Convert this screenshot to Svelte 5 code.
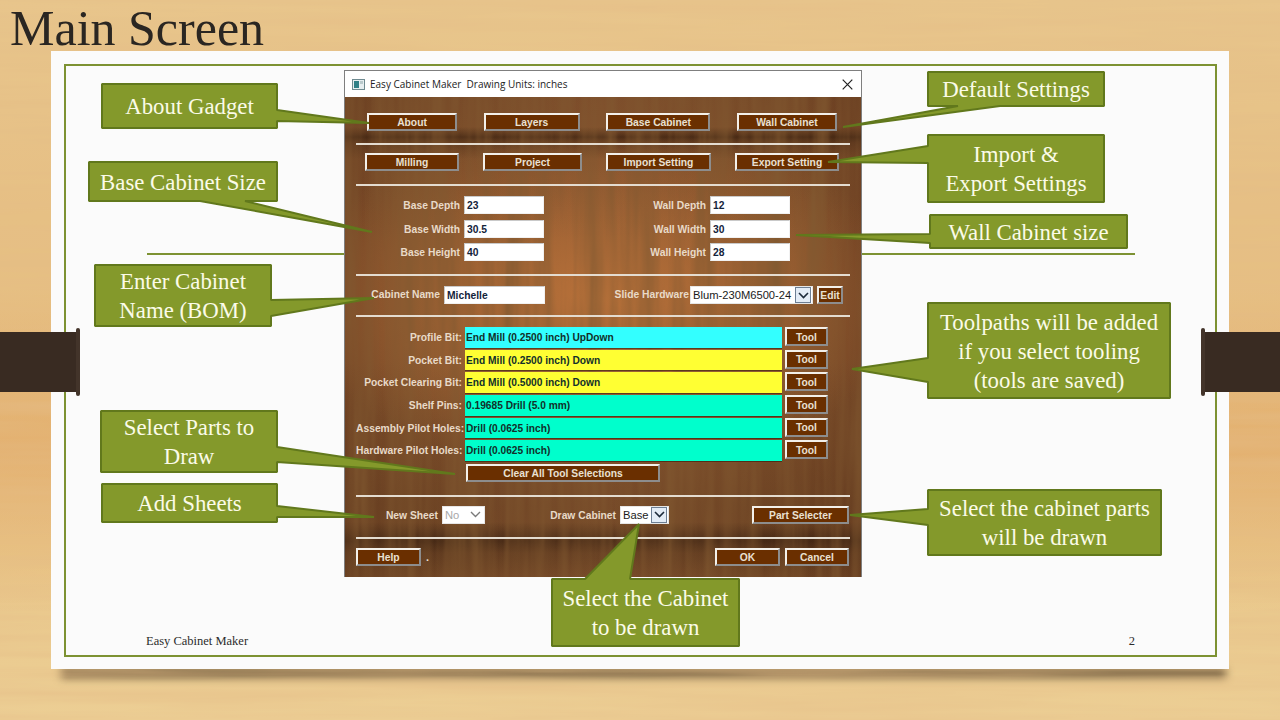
<script>
  const callouts = [
    { x: 101, y: 83, w: 177, h: 46, edge: 'right', a: 110, b: 121, tip: [369, 123], lines: ['About Gadget'] },
    { x: 88, y: 161, w: 190, h: 41, edge: 'bottom', a: 200, b: 245, tip: [372, 232], lines: ['Base Cabinet Size'] },
    { x: 94, y: 264, w: 178, h: 63, edge: 'right', a: 300, b: 316, tip: [374, 298], lines: ['Enter Cabinet', 'Name (BOM)'] },
    { x: 100, y: 410, w: 178, h: 63, edge: 'right', a: 447, b: 462, tip: [455, 474], lines: ['Select Parts to', 'Draw'] },
    { x: 101, y: 483, w: 177, h: 40, edge: 'right', a: 506, b: 517, tip: [374, 517], lines: ['Add Sheets'] },
    { x: 927, y: 71, w: 178, h: 36, edge: 'bottom', a: 958, b: 1000, tip: [843, 127], lines: ['Default Settings'] },
    { x: 927, y: 134, w: 178, h: 69, edge: 'left', a: 146, b: 163, tip: [828, 162], lines: ['Import &', 'Export Settings'] },
    { x: 929, y: 214, w: 199, h: 35, edge: 'left', a: 234, b: 243, tip: [796, 235], lines: ['Wall Cabinet size'] },
    { x: 927, y: 302, w: 244, h: 97, edge: 'left', a: 358, b: 382, tip: [852, 369], lines: ['Toolpaths will be added', 'if you select tooling', '(tools are saved)'] },
    { x: 927, y: 489, w: 235, h: 67, edge: 'left', a: 509, b: 525, tip: [850, 515], lines: ['Select the cabinet parts', 'will be drawn'] },
    { x: 551, y: 578, w: 189, h: 69, edge: 'top', a: 585, b: 630, tip: [639, 524], lines: ['Select the Cabinet', 'to be drawn'] }
  ];

  function outline(c) {
    const l = c.x + 1, u = c.y + 1, r = c.x + c.w - 1, d = c.y + c.h - 1, t = c.tip.join(',');
    const pts = [`${l},${u}`];
    if (c.edge === 'top') pts.push(`${c.a},${u}`, t, `${c.b},${u}`);
    pts.push(`${r},${u}`);
    if (c.edge === 'right') pts.push(`${r},${c.a}`, t, `${r},${c.b}`);
    pts.push(`${r},${d}`);
    if (c.edge === 'bottom') pts.push(`${c.b},${d}`, t, `${c.a},${d}`);
    pts.push(`${l},${d}`);
    if (c.edge === 'left') pts.push(`${l},${c.b}`, t, `${l},${c.a}`);
    return pts.join(' ');
  }

  const tools = [
    { label: 'Profile Bit:', value: 'End Mill (0.2500 inch) UpDown', color: '#33ffff' },
    { label: 'Pocket Bit:', value: 'End Mill (0.2500 inch) Down', color: '#ffff33' },
    { label: 'Pocket Clearing Bit:', value: 'End Mill (0.5000 inch) Down', color: '#ffff33' },
    { label: 'Shelf Pins:', value: '0.19685 Drill (5.0 mm)', color: '#00ffcc' },
    { label: 'Assembly Pilot Holes:', value: 'Drill (0.0625 inch)', color: '#00ffcc' },
    { label: 'Hardware Pilot Holes:', value: 'Drill (0.0625 inch)', color: '#00ffcc' }
  ];
  const fields = [
    ['Base Depth', '23', 'Wall Depth', '12'],
    ['Base Width', '30.5', 'Wall Width', '30'],
    ['Base Height', '40', 'Wall Height', '28']
  ];
</script>

<div class="stage">
  <svg class="grain" width="1280" height="720" aria-hidden="true">
    <filter id="woodH" x="0" y="0" width="100%" height="100%">
      <feTurbulence type="fractalNoise" baseFrequency="0.003 0.07" numOctaves="4" seed="7" />
      <feColorMatrix values="0 0 0 0 .78  0 0 0 0 .5  0 0 0 0 .24  .6 .6 0 0 -.42" />
    </filter>
    <rect width="1280" height="720" filter="url(#woodH)" />
  </svg>

  <h1 class="title">Main Screen</h1>

  <section class="slide">
    <div class="frame">
      <div class="foot">
        <span>Easy Cabinet Maker</span>
        <span>2</span>
      </div>
    </div>
  </section>

  <div class="rule"></div>
  <div class="tab left"><i></i></div>
  <div class="tab right"><i></i></div>

  <div class="dialog">
    <header class="titlebar">
      <svg class="appicon" width="13" height="11" viewBox="0 0 13 11" aria-hidden="true">
        <rect x=".5" y=".5" width="12" height="10" fill="#e6eef0" stroke="#6f8a90" />
        <rect x="2" y="2" width="5" height="7" fill="#2f7f86" />
        <rect x="8" y="2" width="3" height="3" fill="#b9c9cc" />
      </svg>
      <span class="titletext">Easy Cabinet Maker&nbsp; Drawing Units: inches</span>
      <svg class="close" width="11" height="11" viewBox="0 0 11 11" aria-hidden="true">
        <path d="M.7.7l9.6 9.6M10.3.7L.7 10.3" stroke="#222" stroke-width="1.2" fill="none" />
      </svg>
    </header>

    <div class="panel">
      <svg class="panelgrain" width="516" height="480" aria-hidden="true">
        <filter id="woodV" x="0" y="0" width="100%" height="100%">
          <feTurbulence type="fractalNoise" baseFrequency="0.07 0.004" numOctaves="3" seed="11" />
          <feColorMatrix values="0 0 0 0 .22  0 0 0 0 .1  0 0 0 0 .03  .9 .9 0 0 -.6" />
        </filter>
        <rect width="516" height="480" filter="url(#woodV)" />
      </svg>

      <div class="row r1">
        <button class="b w90">About</button>
        <button class="b w96">Layers</button>
        <button class="b w104">Base Cabinet</button>
        <button class="b w100">Wall Cabinet</button>
      </div>
      <hr class="after-r1" />
      <div class="row r2">
        <button class="b w94">Milling</button>
        <button class="b w99">Project</button>
        <button class="b w105">Import Setting</button>
        <button class="b w104">Export Setting</button>
      </div>
      <hr class="after-r2" />
      <div class="fields">
        {#each fields as f}
          <span class="lab">{f[0]}</span>
          <span class="inp">{f[1]}</span>
          <span class="lab">{f[2]}</span>
          <span class="inp">{f[3]}</span>
        {/each}
      </div>
      <hr class="after-fields" />
      <div class="name">
        <span class="lab nm">Cabinet Name</span>
        <span class="inp ni">Michelle</span>
        <span class="lab sl">Slide Hardware</span>
        <span class="sel hw">Blum-230M6500-24<span class="arrow boxed"><svg width="11" height="7" viewBox="0 0 11 7"><path d="M1 1l4.500 4.500L10 1" fill="none" stroke="#1c2a3a" stroke-width="1.6" /></svg></span></span>
        <button class="b edit">Edit</button>
      </div>
      <hr class="after-name" />
      <div class="tools">
        {#each tools as t}
          <span class="lab tl">{t.label}</span>
          <span class="bar" style="background:{t.color}">{t.value}</span>
          <button class="b tool">Tool</button>
        {/each}
      </div>
      <button class="b clear">Clear All Tool Selections</button>
      <hr class="h13" />
      <div class="draw">
        <span class="lab">New Sheet</span>
        <span class="sel off">No<span class="arrow"><svg width="11" height="7" viewBox="0 0 11 7"><path d="M1 1l4.500 4.500L10 1" fill="none" stroke="#7b7b7b" stroke-width="1.400" /></svg></span></span>
        <span class="lab">Draw Cabinet</span>
        <span class="sel">Base<span class="arrow boxed"><svg width="11" height="7" viewBox="0 0 11 7"><path d="M1 1l4.500 4.500L10 1" fill="none" stroke="#1c2a3a" stroke-width="1.600" /></svg></span></span>
        <span></span>
        <button class="b">Part Selecter</button>
      </div>
      <hr class="h13" />
      <div class="bottom">
        <button class="b w65">Help</button>
        <span class="dot">.</span>
        <button class="b w65 push">OK</button>
        <button class="b w64">Cancel</button>
      </div>
    </div>
  </div>

  <svg class="shapes" width="1280" height="720" aria-hidden="true">
    {#each callouts as c}
      <polygon points={outline(c)} />
    {/each}
  </svg>
  {#each callouts as c}
    <div class="note" style="left:{c.x}px;top:{c.y}px;width:{c.w}px;height:{c.h}px">
      {#each c.lines as line}<span>{line}</span>{/each}
    </div>
  {/each}
</div>

<style>
  :global(body) { margin: 0; background: #e6c488; }
  .stage {
    position: relative; width: 1280px; height: 720px; overflow: hidden; isolation: isolate;
    background:
      linear-gradient(180deg, rgba(226,170,104,0) 40%, rgba(226,170,104,.7) 62%, rgba(226,170,104,0) 85%),
      linear-gradient(180deg, #e8c68c 0%, #e6c084 30%, #e6be80 55%, #e9c78a 75%, #ecce94 100%);
    font-family: "Liberation Sans", Arial, sans-serif;
  }
  .grain { position: absolute; inset: 0; }
  .title {
    position: relative; margin: 0; height: 51px; padding: 4.500px 0 0 10px; box-sizing: border-box;
    font: 400 50px/46.500px "Liberation Serif", serif; color: #2a2622;
  }
  .slide {
    position: relative; margin-left: 51px; width: 1178px; height: 618px; box-sizing: border-box;
    padding: 13px 12px 12px 13px; background: #fbfbfb;
  }
  .slide::after {
    content: ""; position: absolute; left: 10px; right: 3px; bottom: -9px; height: 10px; z-index: -1;
    background: rgba(60, 42, 24, .65); filter: blur(4px);
  }
  .frame {
    height: 100%; box-sizing: border-box; border: 2px solid #7d9233;
    display: flex; align-items: flex-end;
  }
  .foot {
    flex: 1; display: flex; justify-content: space-between; padding: 0 80px 7px 80px;
    font: 12.500px/14px "Liberation Serif", serif; color: #2b2b2b;
  }
  .rule { position: absolute; left: 147px; top: 253px; width: 988px; height: 2px; background: #7d9233; }
  .tab { position: absolute; top: 332px; width: 79px; height: 60px; background: #392b22; }
  .tab.left { left: 0; }
  .tab.right { right: 0; }
  .tab i { position: absolute; top: -4px; width: 4px; height: 68px; border-radius: 2px; background: #43342a; }
  .tab.left i { right: -1px; }
  .tab.right i { left: 0; }

  .dialog {
    position: absolute; left: 344px; top: 70px; width: 518px; box-sizing: border-box;
    border: 1px solid #7f7f7f; border-bottom: 0;
    background: #fff;
  }
  .titlebar { height: 26px; display: flex; align-items: center; padding: 0 7px; box-sizing: border-box; }
  .appicon { margin-right: 5px; }
  .titletext { font: 10px/14px "Open Sans", sans-serif; color: #222; }
  .close { margin-left: auto; margin-right: 1px; }
  .panel {
    position: relative; box-sizing: border-box; height: 480px; padding: 16px 11px 0;
    overflow: hidden;
    background:
      linear-gradient(180deg, transparent 0, transparent 30px, rgba(40,20,8,.6) 40px, rgba(40,20,8,.3) 46px, transparent 62px),
      linear-gradient(180deg, transparent 425px, rgba(30,14,6,.5) 444px, rgba(30,14,6,.2) 456px, transparent 480px),
      linear-gradient(180deg, rgba(40,20,8,.12) 0, transparent 30%, transparent 55%, rgba(40,20,8,.22) 85%),
      radial-gradient(ellipse 60% 36% at 50% 42%, rgba(196,120,60,.8), rgba(196,120,60,0) 100%),
      linear-gradient(90deg, #744424 0, #80502b 12%, #8a5630 50%, #80502b 88%, #704022 100%);
  }
  .panelgrain { position: absolute; inset: 0; }
  .panel > :not(.panelgrain) { position: relative; }
  hr { height: 2px; border: 0; background: #e4dcd0; }
  .row { display: flex; justify-content: space-between; }
  .r1 { padding: 0 13px 0 11px; }
  .r2 { padding: 0 11px 0 9px; }
  .after-r1 { margin: 12px 0 8px; }
  .after-r2 { margin: 13px 0 10px; }
  .after-fields { margin: 13px 0 10px; }
  .after-name { margin: 11px 0 10px; }
  .h13 { margin: 13px 0 9px; }
  .b {
    height: 18px; padding: 2px 0 0; box-sizing: border-box;
    border: 2px solid; border-color: #f3f0ea #8d8d8d #8d8d8d #f3f0ea;
    background: #6a2f00; color: #e9e0d2;
    font: 700 10.300px/12px "Liberation Sans", Arial, sans-serif; text-align: center;
  }
  .w90 { width: 90px; } .w96 { width: 96px; } .w104 { width: 104px; } .w100 { width: 100px; }
  .w94 { width: 94px; } .w99 { width: 99px; } .w105 { width: 105px; }
  .w65 { width: 65px; } .w64 { width: 64px; }
  .lab {
    font: 700 10.300px/20px "Liberation Sans", Arial, sans-serif; color: #e8dac8; text-align: right;
    white-space: nowrap;
  }
  .inp {
    height: 18px; box-sizing: border-box; background: #fff; padding: 2px 2px 0;
    border: 1.500px solid; border-color: #c9c9c9 #f1f1f1 #f1f1f1 #c9c9c9;
    font: 700 10.300px/13px "Liberation Sans", Arial, sans-serif; color: #14233a;
  }
  .fields {
    display: grid; grid-template-columns: 108px 80px 166px 80px; grid-auto-rows: 18px; row-gap: 5.500px;
  }
  .fields .lab { padding-right: 4px; }
  .name { display: flex; align-items: center; height: 18px; }
  .nm { width: 88px; padding-right: 4px; box-sizing: border-box; flex: none; }
  .ni { width: 101px; flex: none; }
  .sl { width: 145px; flex: none; line-height: 22px; box-sizing: border-box; padding-right: 1px; }
  .sel {
    position: relative; height: 18px; box-sizing: border-box; background: #fff;
    border: 1px solid #e6e6e6; padding-left: 2px;
    font: 400 11.200px/16px "Liberation Sans", Arial, sans-serif; color: #1b1b1b;
  }
  .hw { width: 123px; flex: none; }
  .edit { width: 26px; flex: none; margin-left: 4px; }
  .arrow {
    position: absolute; right: 1px; top: 0; bottom: 0; width: 16px;
    display: flex; align-items: center; justify-content: center;
  }
  .boxed { background: #e3ecf6; border: 1px solid #6d7f94; box-sizing: border-box; }
  .off { color: #a8a8a8; }
  .tools {
    display: grid; grid-template-columns: 109px 317px 3px 43px; row-gap: 2.200px; grid-auto-rows: 20.500px;
  }
  .tl { grid-column: 1; line-height: 22px; padding-right: 3px; box-sizing: border-box; }
  .bar {
    grid-column: 2; padding: 1px 0 0 1px; white-space: nowrap;
    font: 700 10.200px/19px "Liberation Sans", Arial, sans-serif; color: #12302a;
    box-shadow: 0 1px 0 rgba(40,20,8,.5);
  }
  .tool { grid-column: 4; height: 19px; }
  .clear { display: block; width: 194px; margin: 3px 0 0 110px; }
  .draw { display: grid; grid-template-columns: 86px 43px 135px 49px 83px 97px; height: 18px; }
  .draw .lab { padding-right: 4px; line-height: 19px; }
  .bottom { display: flex; height: 18px; align-items: center; padding-right: 1px; }
  .dot { margin-left: 5px; color: #e9e0d2; font: 700 11px/18px "Liberation Sans", Arial, sans-serif; }
  .push { margin-left: auto; margin-right: 5px; }

  .shapes { position: absolute; inset: 0; pointer-events: none; }
  .shapes polygon { fill: #84992b; stroke: #61781c; stroke-width: 2; stroke-linejoin: bevel; }
  .note {
    position: absolute; box-sizing: border-box; padding-top: 1px;
    display: flex; flex-direction: column; align-items: center; justify-content: center;
    font: 400 22.800px/29px "Liberation Serif", serif; color: #fbfbe8; white-space: nowrap;
  }
</style>
